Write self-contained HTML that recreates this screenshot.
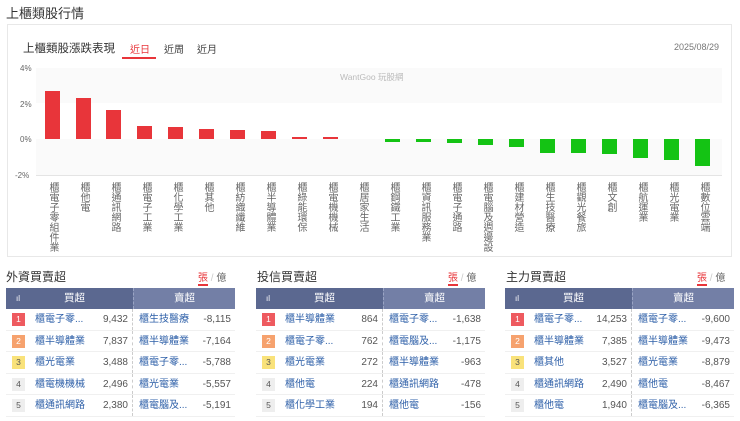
<!DOCTYPE html><html><head><meta charset="utf-8"><style>
*{margin:0;padding:0;box-sizing:border-box}
body{width:740px;height:421px;background:#fff;font-family:"Liberation Sans","Noto Sans CJK TC",sans-serif;position:relative;overflow:hidden;color:#333}
.a{position:absolute}
.bar{position:absolute;width:15px}
.r{background:#e8353a}.g{background:#14c314}
.lb{position:absolute;top:182px;writing-mode:vertical-rl;font-size:10px;color:#666;width:14px;line-height:14px}
.yl{position:absolute;left:20px;font-size:8px;color:#666}
.tbl{position:absolute;top:288px;width:229px}
.hd{height:21px;display:flex;color:#fff;font-size:10.5px;line-height:21px}
.hd .l{width:127px;background:#5b6890;position:relative;text-align:center;padding-left:10px}
.hd .rr{flex:1;background:#737fa6;text-align:center;border-left:1px dashed #9aa4c4}
.row{height:21.5px;display:flex;font-size:10px;line-height:21.5px;border-bottom:1px solid #f0f0f0}
.row .l{width:127px;display:flex;border-right:1px dashed #ccc}
.rk{width:13px;height:13px;margin:4px 0 0 6px;font-size:8.5px;line-height:13px;text-align:center;color:#fff;flex:none}
.n{color:#2d5fa8;margin-left:10px;flex:1;white-space:nowrap;overflow:hidden}
.v{color:#555;padding-right:4px;flex:none}
.row .rr{flex:1;display:flex;padding-left:6px}
.ttl{position:absolute;top:268px;font-size:12px;color:#333}
.tg{position:absolute;top:269px;font-size:10px;color:#666}
</style></head><body>
<div class="a" style="left:6px;top:3px;font-size:13px;color:#333">上櫃類股行情</div>
<div class="a" style="left:7px;top:24px;width:725px;height:233px;border:1px solid #e8e8e8"></div>
<div class="a" style="left:23px;top:40px;font-size:11.5px;color:#333">上櫃類股漲跌表現</div>
<div class="a" style="left:130px;top:41px;font-size:10px;color:#e8353a">近日</div>
<div class="a" style="left:122px;top:57px;width:34px;height:2px;background:#e8353a"></div>
<div class="a" style="left:164px;top:41px;font-size:10px;color:#444">近周</div>
<div class="a" style="left:197px;top:41px;font-size:10px;color:#444">近月</div>
<div class="a" style="left:674px;top:42px;font-size:9px;color:#777">2025/08/29</div>
<div class="a" style="left:36px;top:68px;width:686px;height:35px;background:#fafafa"></div>
<div class="a" style="left:36px;top:139px;width:686px;height:36px;background:#fafafa"></div>
<div class="a" style="left:36px;top:175px;width:686px;height:1px;background:#e4e4e4"></div>
<div class="a" style="left:340px;top:71px;font-size:8.5px;color:#bbb">WantGoo 玩股網</div>
<div class="yl" style="top:64px">4%</div><div class="yl" style="top:100px">2%</div><div class="yl" style="top:135px">0%</div><div class="yl" style="top:171px;left:15px">-2%</div>
<div class="bar r" style="left:44.5px;top:91px;height:48px"></div>
<div class="bar r" style="left:75.5px;top:98px;height:41px"></div>
<div class="bar r" style="left:106.4px;top:110px;height:29px"></div>
<div class="bar r" style="left:137.4px;top:126px;height:13px"></div>
<div class="bar r" style="left:168.3px;top:127px;height:12px"></div>
<div class="bar r" style="left:199.3px;top:129px;height:10px"></div>
<div class="bar r" style="left:230.2px;top:130px;height:9px"></div>
<div class="bar r" style="left:261.2px;top:131px;height:8px"></div>
<div class="bar r" style="left:292.1px;top:137px;height:2px"></div>
<div class="bar r" style="left:323.1px;top:137px;height:2px"></div>
<div class="bar g" style="left:385px;top:139px;height:3px"></div>
<div class="bar g" style="left:415.9px;top:139px;height:3px"></div>
<div class="bar g" style="left:446.9px;top:139px;height:4px"></div>
<div class="bar g" style="left:477.8px;top:139px;height:6px"></div>
<div class="bar g" style="left:508.8px;top:139px;height:8px"></div>
<div class="bar g" style="left:539.7px;top:139px;height:14px"></div>
<div class="bar g" style="left:570.7px;top:139px;height:14px"></div>
<div class="bar g" style="left:601.6px;top:139px;height:15px"></div>
<div class="bar g" style="left:632.6px;top:139px;height:19px"></div>
<div class="bar g" style="left:663.5px;top:139px;height:21px"></div>
<div class="bar g" style="left:694.5px;top:139px;height:27px"></div>
<div class="lb" style="left:45px">櫃電子零組件業</div>
<div class="lb" style="left:76px">櫃他電</div>
<div class="lb" style="left:107px">櫃通訊網路</div>
<div class="lb" style="left:138px">櫃電子工業</div>
<div class="lb" style="left:169px">櫃化學工業</div>
<div class="lb" style="left:200px">櫃其他</div>
<div class="lb" style="left:231px">櫃紡織纖維</div>
<div class="lb" style="left:262px">櫃半導體業</div>
<div class="lb" style="left:293px">櫃綠能環保</div>
<div class="lb" style="left:324px">櫃電機機械</div>
<div class="lb" style="left:355px">櫃居家生活</div>
<div class="lb" style="left:386px">櫃鋼鐵工業</div>
<div class="lb" style="left:417px">櫃資訊服務業</div>
<div class="lb" style="left:448px">櫃電子通路</div>
<div class="lb" style="left:479px">櫃電腦及週邊設</div>
<div class="lb" style="left:510px">櫃建材營造</div>
<div class="lb" style="left:541px">櫃生技醫療</div>
<div class="lb" style="left:572px">櫃觀光餐旅</div>
<div class="lb" style="left:603px">櫃文創</div>
<div class="lb" style="left:634px">櫃航運業</div>
<div class="lb" style="left:665px">櫃光電業</div>
<div class="lb" style="left:696px">櫃數位雲端</div>

<div class="ttl" style="left:6px">外資買賣超</div>
<div class="tg" style="left:198px"><span style="color:#e8353a;border-bottom:2px solid #e8353a">張</span> <span style="color:#ccc">/</span> 億</div>
<div class="ttl" style="left:257px">投信買賣超</div>
<div class="tg" style="left:448px"><span style="color:#e8353a;border-bottom:2px solid #e8353a">張</span> <span style="color:#ccc">/</span> 億</div>
<div class="ttl" style="left:506px">主力買賣超</div>
<div class="tg" style="left:697px"><span style="color:#e8353a;border-bottom:2px solid #e8353a">張</span> <span style="color:#ccc">/</span> 億</div>

<div class="tbl" style="left:6px">
<div class="hd"><div class="l"><span style="position:absolute;left:10px;font-size:8px">ıl</span>買超</div><div class="rr">賣超</div></div>
<div class="row"><div class="l"><div class="rk" style="background:#ee5a5f">1</div><div class="n">櫃電子零...</div><div class="v">9,432</div></div><div class="rr"><div class="n" style="margin-left:0">櫃生技醫療</div><div class="v">-8,115</div></div></div>
<div class="row"><div class="l"><div class="rk" style="background:#f6a26e">2</div><div class="n">櫃半導體業</div><div class="v">7,837</div></div><div class="rr"><div class="n" style="margin-left:0">櫃半導體業</div><div class="v">-7,164</div></div></div>
<div class="row"><div class="l"><div class="rk" style="background:#f9e27a;color:#555">3</div><div class="n">櫃光電業</div><div class="v">3,488</div></div><div class="rr"><div class="n" style="margin-left:0">櫃電子零...</div><div class="v">-5,788</div></div></div>
<div class="row"><div class="l"><div class="rk" style="background:#eee;color:#555">4</div><div class="n">櫃電機機械</div><div class="v">2,496</div></div><div class="rr"><div class="n" style="margin-left:0">櫃光電業</div><div class="v">-5,557</div></div></div>
<div class="row"><div class="l"><div class="rk" style="background:#eee;color:#555">5</div><div class="n">櫃通訊網路</div><div class="v">2,380</div></div><div class="rr"><div class="n" style="margin-left:0">櫃電腦及...</div><div class="v">-5,191</div></div></div>
</div>

<div class="tbl" style="left:256px">
<div class="hd"><div class="l"><span style="position:absolute;left:10px;font-size:8px">ıl</span>買超</div><div class="rr">賣超</div></div>
<div class="row"><div class="l"><div class="rk" style="background:#ee5a5f">1</div><div class="n">櫃半導體業</div><div class="v">864</div></div><div class="rr"><div class="n" style="margin-left:0">櫃電子零...</div><div class="v">-1,638</div></div></div>
<div class="row"><div class="l"><div class="rk" style="background:#f6a26e">2</div><div class="n">櫃電子零...</div><div class="v">762</div></div><div class="rr"><div class="n" style="margin-left:0">櫃電腦及...</div><div class="v">-1,175</div></div></div>
<div class="row"><div class="l"><div class="rk" style="background:#f9e27a;color:#555">3</div><div class="n">櫃光電業</div><div class="v">272</div></div><div class="rr"><div class="n" style="margin-left:0">櫃半導體業</div><div class="v">-963</div></div></div>
<div class="row"><div class="l"><div class="rk" style="background:#eee;color:#555">4</div><div class="n">櫃他電</div><div class="v">224</div></div><div class="rr"><div class="n" style="margin-left:0">櫃通訊網路</div><div class="v">-478</div></div></div>
<div class="row"><div class="l"><div class="rk" style="background:#eee;color:#555">5</div><div class="n">櫃化學工業</div><div class="v">194</div></div><div class="rr"><div class="n" style="margin-left:0">櫃他電</div><div class="v">-156</div></div></div>
</div>

<div class="tbl" style="left:505px">
<div class="hd"><div class="l"><span style="position:absolute;left:10px;font-size:8px">ıl</span>買超</div><div class="rr">賣超</div></div>
<div class="row"><div class="l"><div class="rk" style="background:#ee5a5f">1</div><div class="n">櫃電子零...</div><div class="v">14,253</div></div><div class="rr"><div class="n" style="margin-left:0">櫃電子零...</div><div class="v">-9,600</div></div></div>
<div class="row"><div class="l"><div class="rk" style="background:#f6a26e">2</div><div class="n">櫃半導體業</div><div class="v">7,385</div></div><div class="rr"><div class="n" style="margin-left:0">櫃半導體業</div><div class="v">-9,473</div></div></div>
<div class="row"><div class="l"><div class="rk" style="background:#f9e27a;color:#555">3</div><div class="n">櫃其他</div><div class="v">3,527</div></div><div class="rr"><div class="n" style="margin-left:0">櫃光電業</div><div class="v">-8,879</div></div></div>
<div class="row"><div class="l"><div class="rk" style="background:#eee;color:#555">4</div><div class="n">櫃通訊網路</div><div class="v">2,490</div></div><div class="rr"><div class="n" style="margin-left:0">櫃他電</div><div class="v">-8,467</div></div></div>
<div class="row"><div class="l"><div class="rk" style="background:#eee;color:#555">5</div><div class="n">櫃他電</div><div class="v">1,940</div></div><div class="rr"><div class="n" style="margin-left:0">櫃電腦及...</div><div class="v">-6,365</div></div></div>
</div>
</body></html>
